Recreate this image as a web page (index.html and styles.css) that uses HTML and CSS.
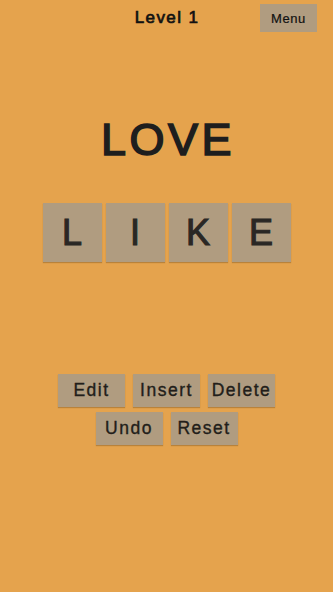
FILE: index.html
```html
<!DOCTYPE html>
<html lang="en">
<head>
  <meta charset="UTF-8" />
  <meta name="viewport" content="width=device-width, initial-scale=1.0"/>
  <title>Word Ladder</title>
  <link rel="stylesheet" href="styles.css">
</head>
<body>
  <div class="screen">
    <div class="header">
      <h1>Level 1</h1>
      <button class="menu-btn">Menu</button>
    </div>

    <div class="target">LOVE</div>

    <div class="tiles">
      <div class="tile">L</div>
      <div class="tile">I</div>
      <div class="tile">K</div>
      <div class="tile">E</div>
    </div>

    <div class="actions">
      <div class="action-row">
        <button class="btn">Edit</button>
        <button class="btn">Insert</button>
        <button class="btn">Delete</button>
      </div>
      <div class="action-row">
        <button class="btn">Undo</button>
        <button class="btn">Reset</button>
      </div>
    </div>
  </div>
</body>
</html>
```

FILE: styles.css
```css
body {
  margin: 0;
  background-color: #e5a34d;
  font-family: "Liberation Sans", Arial, sans-serif;
  color: #221e1a;
}

.screen {
  width: 333px;
  height: 592px;
  display: flex;
  flex-direction: column;
  align-items: center;
}

.header {
  position: relative;
  width: 100%;
  height: 36px;
}

.header h1 {
  margin: 0;
  padding-left: 1px;
  text-align: center;
  font-size: 17px;
  font-weight: 400;
  letter-spacing: 1.4px;
  line-height: 35px;
  color: #111;
  -webkit-text-stroke: 0.7px #111;
}

.menu-btn {
  position: absolute;
  top: 4px;
  right: 16px;
  width: 57px;
  height: 28px;
  border: none;
  background-color: #b09c80;
  font-family: inherit;
  font-size: 13px;
  letter-spacing: 0.6px;
  color: #111;
  -webkit-text-stroke: 0.2px #111;
  padding: 0;
}

.target {
  margin-top: 79px;
  padding-left: 3px;
  font-size: 45px;
  letter-spacing: 3.5px;
  line-height: 50px;
  color: #1e1e1e;
  -webkit-text-stroke: 1.6px #1e1e1e;
}

.tiles {
  display: flex;
  gap: 4px;
  margin-top: 38px;
}

.tile {
  width: 59px;
  height: 59px;
  background-color: #b09c80;
  box-shadow: 0 1px 1px rgba(120, 80, 30, 0.4);
  display: flex;
  align-items: center;
  justify-content: center;
  font-size: 36px;
  color: #2a2724;
  -webkit-text-stroke: 1.1px #2a2724;
}

.actions {
  margin-top: 112px;
  display: flex;
  flex-direction: column;
  gap: 5px;
  align-items: center;
}

.action-row {
  display: flex;
  gap: 8px;
}

.btn {
  width: 67px;
  height: 33px;
  padding: 0;
  border: none;
  background-color: #b09c80;
  box-shadow: 0 1px 1px rgba(120, 80, 30, 0.4);
  font-family: inherit;
  font-size: 17.5px;
  letter-spacing: 1.5px;
  color: #221e1a;
  -webkit-text-stroke: 0.35px #221e1a;
}
```
